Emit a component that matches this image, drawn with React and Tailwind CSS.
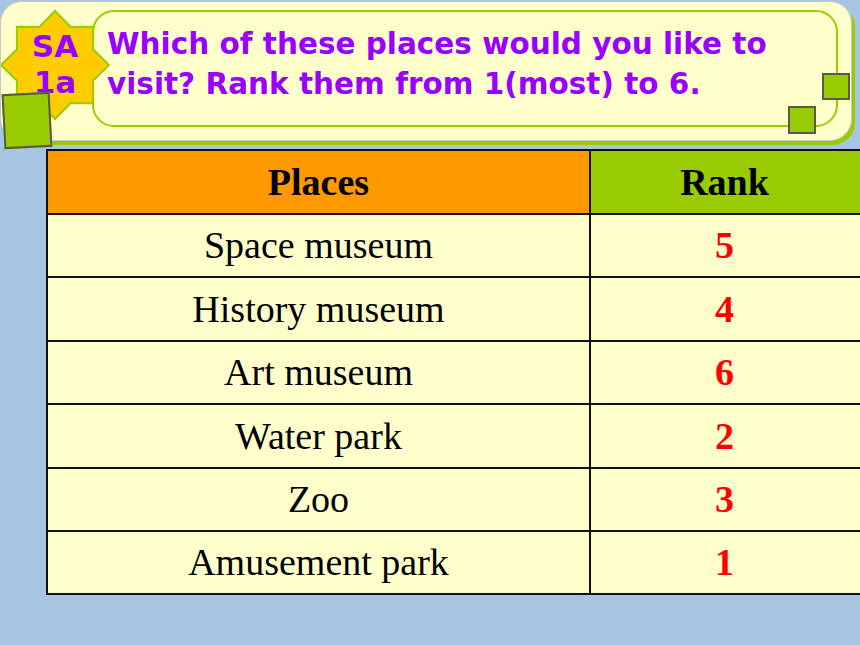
import React from "react";

const rows = [
  ["Space museum", "5", "h-[63px]"],
  ["History museum", "4", "h-[64px]"],
  ["Art museum", "6", "h-[63px]"],
  ["Water park", "2", "h-[64px]"],
  ["Zoo", "3", "h-[63px]"],
  ["Amusement park", "1", "h-[63px]"],
];

const comic = { fontFamily: '"DejaVu Sans", sans-serif' };

function Star() {
  const pts = "108,64 92,79.7 92.2,102.2 69.7,102 54,118 38.3,102 15.8,102.2 16,79.7 0,64 16,48.3 15.8,25.8 38.3,26 54,10 69.7,26 92.2,25.8 92,48.3";
  return (
    <div className="absolute left-0 top-[-1px] w-[110px] h-[120px]">
      <svg className="absolute inset-0" width="110" height="120" viewBox="0 0 110 120">
        <polygon points={pts} fill="#ffcc00" stroke="#99cc00" strokeWidth="2" />
      </svg>
      <div className="relative pt-[27px] w-[108px] text-center text-[#9900ff] font-bold text-[31px] leading-[36px]" style={comic}>
        SA
        <br />
        1a
      </div>
    </div>
  );
}

function Square({ className }) {
  return <div className={`absolute bg-[#99cc00] border-2 border-[#5a5a4a] ${className}`} />;
}

export default function App() {
  return (
    <div className="w-[860px] h-[645px] overflow-hidden bg-[#a7c5e3] pt-[1px]" style={{ fontFamily: '"Liberation Serif", serif' }}>
      {/* header panel */}
      <div className="relative w-[852px] h-[140px] rounded-[22px] bg-[#ffffcc] border border-[#c8c8c8] shadow-[3px_4px_0_#99cc00] pt-[8px] pl-[91px]">
        <div className="w-[746px] h-[117px] rounded-[22px] border-2 border-[#99cc00] pl-[13px] pt-[12px]">
          <p className="text-[#9900ff] font-bold text-[29.5px] leading-[40px]" style={comic}>
            Which of these places would you like to
            <br />
            visit? Rank them from 1(most) to 6.
          </p>
        </div>
        <Star />
        <Square className="left-[2px] top-[91px] w-[48px] h-[55px] -rotate-[3deg]" />
        <Square className="left-[821px] top-[71px] w-[28px] h-[27px]" />
        <Square className="left-[787px] top-[104px] w-[28px] h-[28px]" />
      </div>

      {/* table */}
      <div className="mt-[8px] ml-[46px] w-[818px] border-2 border-[#111] text-black text-[38px]">
        <div className="flex h-[62px] font-bold">
          <div className="w-[543px] bg-[#ff9900] border-r-2 border-[#111] flex items-center justify-center">Places</div>
          <div className="flex-1 bg-[#99cc00] flex items-center justify-center pr-[4px]">Rank</div>
        </div>
        {rows.map(([p, r, h]) => (
          <div key={p} className={`flex border-t-2 border-[#111] ${h}`}>
            <div className="w-[543px] bg-[#ffffcc] border-r-2 border-[#111] flex items-center justify-center">{p}</div>
            <div className="flex-1 bg-[#ffffcc] flex items-center justify-center font-bold text-[#ff0000] pr-[4px]">{r}</div>
          </div>
        ))}
      </div>
    </div>
  );
}
